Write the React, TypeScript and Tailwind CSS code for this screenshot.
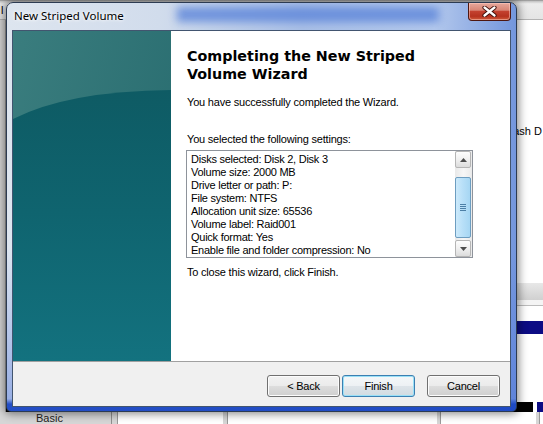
import React from "react";

const settings = [
  "Disks selected: Disk 2, Disk 3",
  "Volume size: 2000 MB",
  "Drive letter or path: P:",
  "File system: NTFS",
  "Allocation unit size: 65536",
  "Volume label: Raid001",
  "Quick format: Yes",
  "Enable file and folder compression: No",
];

function SideArt() {
  return (
    <div className="w-[158px] shrink-0 bg-[#2d7274]">
      <svg width="158" height="330" viewBox="0 0 158 330" className="block">
        <defs>
          <linearGradient id="art-top" x1="0" y1="0" x2="1" y2="0.5">
            <stop offset="0" stopColor="#3a7d7e" />
            <stop offset="1" stopColor="#2a6e71" />
          </linearGradient>
          <linearGradient id="art-low" x1="0" y1="0" x2="0" y2="1">
            <stop offset="0" stopColor="#0e5b64" />
            <stop offset="0.45" stopColor="#0f646f" />
            <stop offset="1" stopColor="#13727f" />
          </linearGradient>
        </defs>
        <rect width="158" height="330" fill="url(#art-top)" />
        <path d="M0 88 Q 55 60 158 59 L158 330 L0 330 Z" fill="url(#art-low)" />
      </svg>
    </div>
  );
}

function ArrowButton({ up }: { up?: boolean }) {
  return (
    <div className="h-[17px] w-[16px] rounded-[2px] border border-[#b5b5b5] bg-[linear-gradient(180deg,#fdfdfd_0%,#f0f0f0_50%,#dcdcdc_100%)] flex items-center justify-center">
      <svg width="7" height="4" viewBox="0 0 7 4">
        {up ? (
          <path d="M0 4 L3.5 0 L7 4 Z" fill="#4d4d4d" />
        ) : (
          <path d="M0 0 L3.5 4 L7 0 Z" fill="#4d4d4d" />
        )}
      </svg>
    </div>
  );
}

function ScrollBar() {
  return (
    <div className="w-[17px] shrink-0 flex flex-col bg-[linear-gradient(90deg,#e9e9e9_0%,#f6f6f6_50%,#eaeaea_100%)]">
      <ArrowButton up />
      <div className="flex-1 flex flex-col pt-[9px] pb-[2px]">
        <div className="flex-1 w-[16px] rounded-[2px] border border-[#6d9dc0] bg-[linear-gradient(90deg,#cdeafb_0%,#b9e0f8_45%,#a6d6f3_100%)] flex items-center justify-center">
          <div className="flex flex-col gap-[1px]">
            <div className="w-[6px] h-[1px] bg-[#4c7fa6]" />
            <div className="w-[6px] h-[1px] bg-[#4c7fa6]" />
            <div className="w-[6px] h-[1px] bg-[#4c7fa6]" />
            <div className="w-[6px] h-[1px] bg-[#4c7fa6]" />
          </div>
        </div>
      </div>
      <ArrowButton />
    </div>
  );
}

function Btn({ label, primary }: { label: string; primary?: boolean }) {
  return (
    <div
      className={
        primary
          ? "w-[73px] h-[22px] rounded-[3px] border border-[#3c7fb1] bg-[linear-gradient(180deg,#f4f7f9_0%,#edf1f4_50%,#dde4e9_51%,#d2dbe1_100%)] shadow-[inset_0_0_0_1px_#9ae0f7] flex items-center justify-center text-[11px] text-black"
          : "w-[73px] h-[22px] rounded-[3px] border border-[#707070] bg-[linear-gradient(180deg,#f2f2f2_0%,#ebebeb_50%,#dddddd_51%,#cfcfcf_100%)] shadow-[inset_0_0_0_1px_#fcfcfc] flex items-center justify-center text-[11px] text-black"
      }
    >
      {label}
    </div>
  );
}

function CloseButton() {
  return (
    <div className="w-[43px] h-[18px] rounded-b-[4px] border border-t-0 border-[#4e1610] bg-[linear-gradient(180deg,#e7a89c_0%,#d88676_42%,#c3412f_50%,#b6321f_78%,#cf5a3a_100%)] shadow-[inset_0_0_0_1px_rgba(255,210,200,0.5)] flex items-center justify-center">
      <svg width="15" height="11" viewBox="0 0 15 11">
        <path d="M2.5 1.5 L12.5 9.5 M12.5 1.5 L2.5 9.5" stroke="#3d0f0a" strokeWidth="4.2" strokeLinecap="round" />
        <path d="M2.5 1.5 L12.5 9.5 M12.5 1.5 L2.5 9.5" stroke="#ffffff" strokeWidth="2.3" strokeLinecap="round" />
      </svg>
    </div>
  );
}

function Backdrop() {
  return (
    <div className="flex flex-col w-full h-full font-['Liberation_Sans',Arial,sans-serif] text-[11px]">
      <div className="h-[20px] shrink-0 bg-[linear-gradient(180deg,#8c8c8c_0%,#c9c9c9_8%,#ececec_20%,#e4e4e4_100%)] border-b border-[#b3b3b3] flex">
        <div className="w-[6px] text-black leading-[14px] pt-[3px] pl-[1px]">l</div>
      </div>
      <div className="flex-1 flex">
        <div className="w-[6px] shrink-0 bg-[#d3d3d3] border-r border-[#9c9c9c]" />
        <div className="flex-1 flex flex-col bg-white">
          <div className="h-[263px] shrink-0 pt-[105px] pl-[498px] text-black leading-[13px] whitespace-nowrap">
            Flash D
          </div>
          <div className="h-[17px] shrink-0 bg-[linear-gradient(180deg,#e8e8e8_0%,#d0d0d0_100%)]" />
          <div className="h-[6px] shrink-0 bg-[#f4f4f4] border-b border-[#bcbcbc]" />
          <div className="h-[15px] shrink-0 bg-white" />
          <div className="h-[13px] shrink-0 bg-[#0c0c84]" />
          <div className="flex-1 bg-white" />
          <div className="h-[10px] shrink-0 flex">
            <div className="w-[527px] bg-[#000000]" />
            <div className="w-[4px] bg-white" />
            <div className="flex-1 bg-[#0c0c84]" />
          </div>
        </div>
      </div>
      <div className="h-[12px] shrink-0 flex bg-[#d6d6d6]">
        <div className="w-[112px] shrink-0 border-r border-[#8f8f8f] pl-[36px] leading-[12px] text-[#222] overflow-hidden">
          Basic
        </div>
        <div className="w-[106px] shrink-0 ml-[5px] bg-white border-l border-[#9a9a9a]" />
        <div className="w-[210px] shrink-0 ml-[4px] bg-white border-l border-[#9a9a9a]" />
        <div className="w-[96px] shrink-0 ml-[3px] bg-white border-l border-[#9a9a9a]" />
        <div className="flex-1 ml-[3px] bg-white border-l border-[#9a9a9a]" />
      </div>
    </div>
  );
}

export default function App() {
  return (
    <div className="relative w-[543px] h-[424px] overflow-hidden bg-white">
      <Backdrop />

      {/* wizard window */}
      <div className="absolute left-[6px] top-[2px] w-[511px] h-[410px] rounded-t-[7px] rounded-b-[5px] border border-[#2c3b52] shadow-[0_0_9px_2px_rgba(0,0,0,0.45)] bg-[linear-gradient(180deg,rgba(255,255,255,0)_0%,rgba(255,255,255,0)_60%,rgba(70,110,215,0.45)_97%,rgba(25,70,195,0.95)_98.3%,rgba(25,70,195,0.95)_100%),linear-gradient(90deg,#dde5ef_0%,#d1dcec_30%,#a9bfe6_58%,#b3c8ec_84%,#7396dd_100%)] flex flex-col overflow-hidden">
        {/* title bar */}
        <div className="relative h-[27px] shrink-0 flex items-start pl-[7px] pr-[5px]">
          <div className="absolute left-[170px] top-[4px] w-[262px] h-[15px] bg-[#5b84d9] blur-[4px] opacity-80" />
          <div className="relative pt-[5px] text-[11.5px] leading-[16px] text-black font-['Noto_Sans',sans-serif] [text-shadow:0_0_5px_#fff,0_0_3px_#fff]">
            New Striped Volume
          </div>
          <div className="flex-1" />
          <div className="relative">
            <CloseButton />
          </div>
        </div>

        {/* client area */}
        <div className="ml-[5px] mr-[5px] h-[377px] shrink-0 border border-[#42556f] bg-white flex flex-col font-['Liberation_Sans',Arial,sans-serif] tracking-[-0.2px]">
          <div className="h-[330px] shrink-0 flex">
            <SideArt />
            <div className="flex-1 bg-white pl-[16px] pt-[16px] text-black">
              <div className="font-['DejaVu_Sans',Verdana,sans-serif] font-bold text-[14.3px] leading-[18px] tracking-normal">
                Completing the New Striped
                <br />
                Volume Wizard
              </div>
              <div className="mt-[13px] text-[11px] leading-[13px]">
                You have successfully completed the Wizard.
              </div>
              <div className="mt-[24px] text-[11px] leading-[13px]">
                You selected the following settings:
              </div>
              <div className="mt-[4px] ml-[-1px] w-[287px] h-[108px] border border-[#8e939b] flex">
                <div className="flex-1 pl-[4px] pt-[2px] text-[11px] leading-[13px] tracking-[-0.25px]">
                  {settings.map((s) => (
                    <div key={s} className="whitespace-nowrap">
                      {s}
                    </div>
                  ))}
                </div>
                <ScrollBar />
              </div>
              <div className="mt-[8px] text-[11px] leading-[13px]">
                To close this wizard, click Finish.
              </div>
            </div>
          </div>
          <div className="flex-1 border-t border-[#a0a0a0] bg-[#f0f0f0] flex items-start justify-end pt-[13px] pr-[10px] text-black">
            <Btn label="< Back" />
            <div className="ml-[2px]">
              <Btn label="Finish" primary />
            </div>
            <div className="ml-[12px]">
              <Btn label="Cancel" />
            </div>
          </div>
        </div>
      </div>
    </div>
  );
}
